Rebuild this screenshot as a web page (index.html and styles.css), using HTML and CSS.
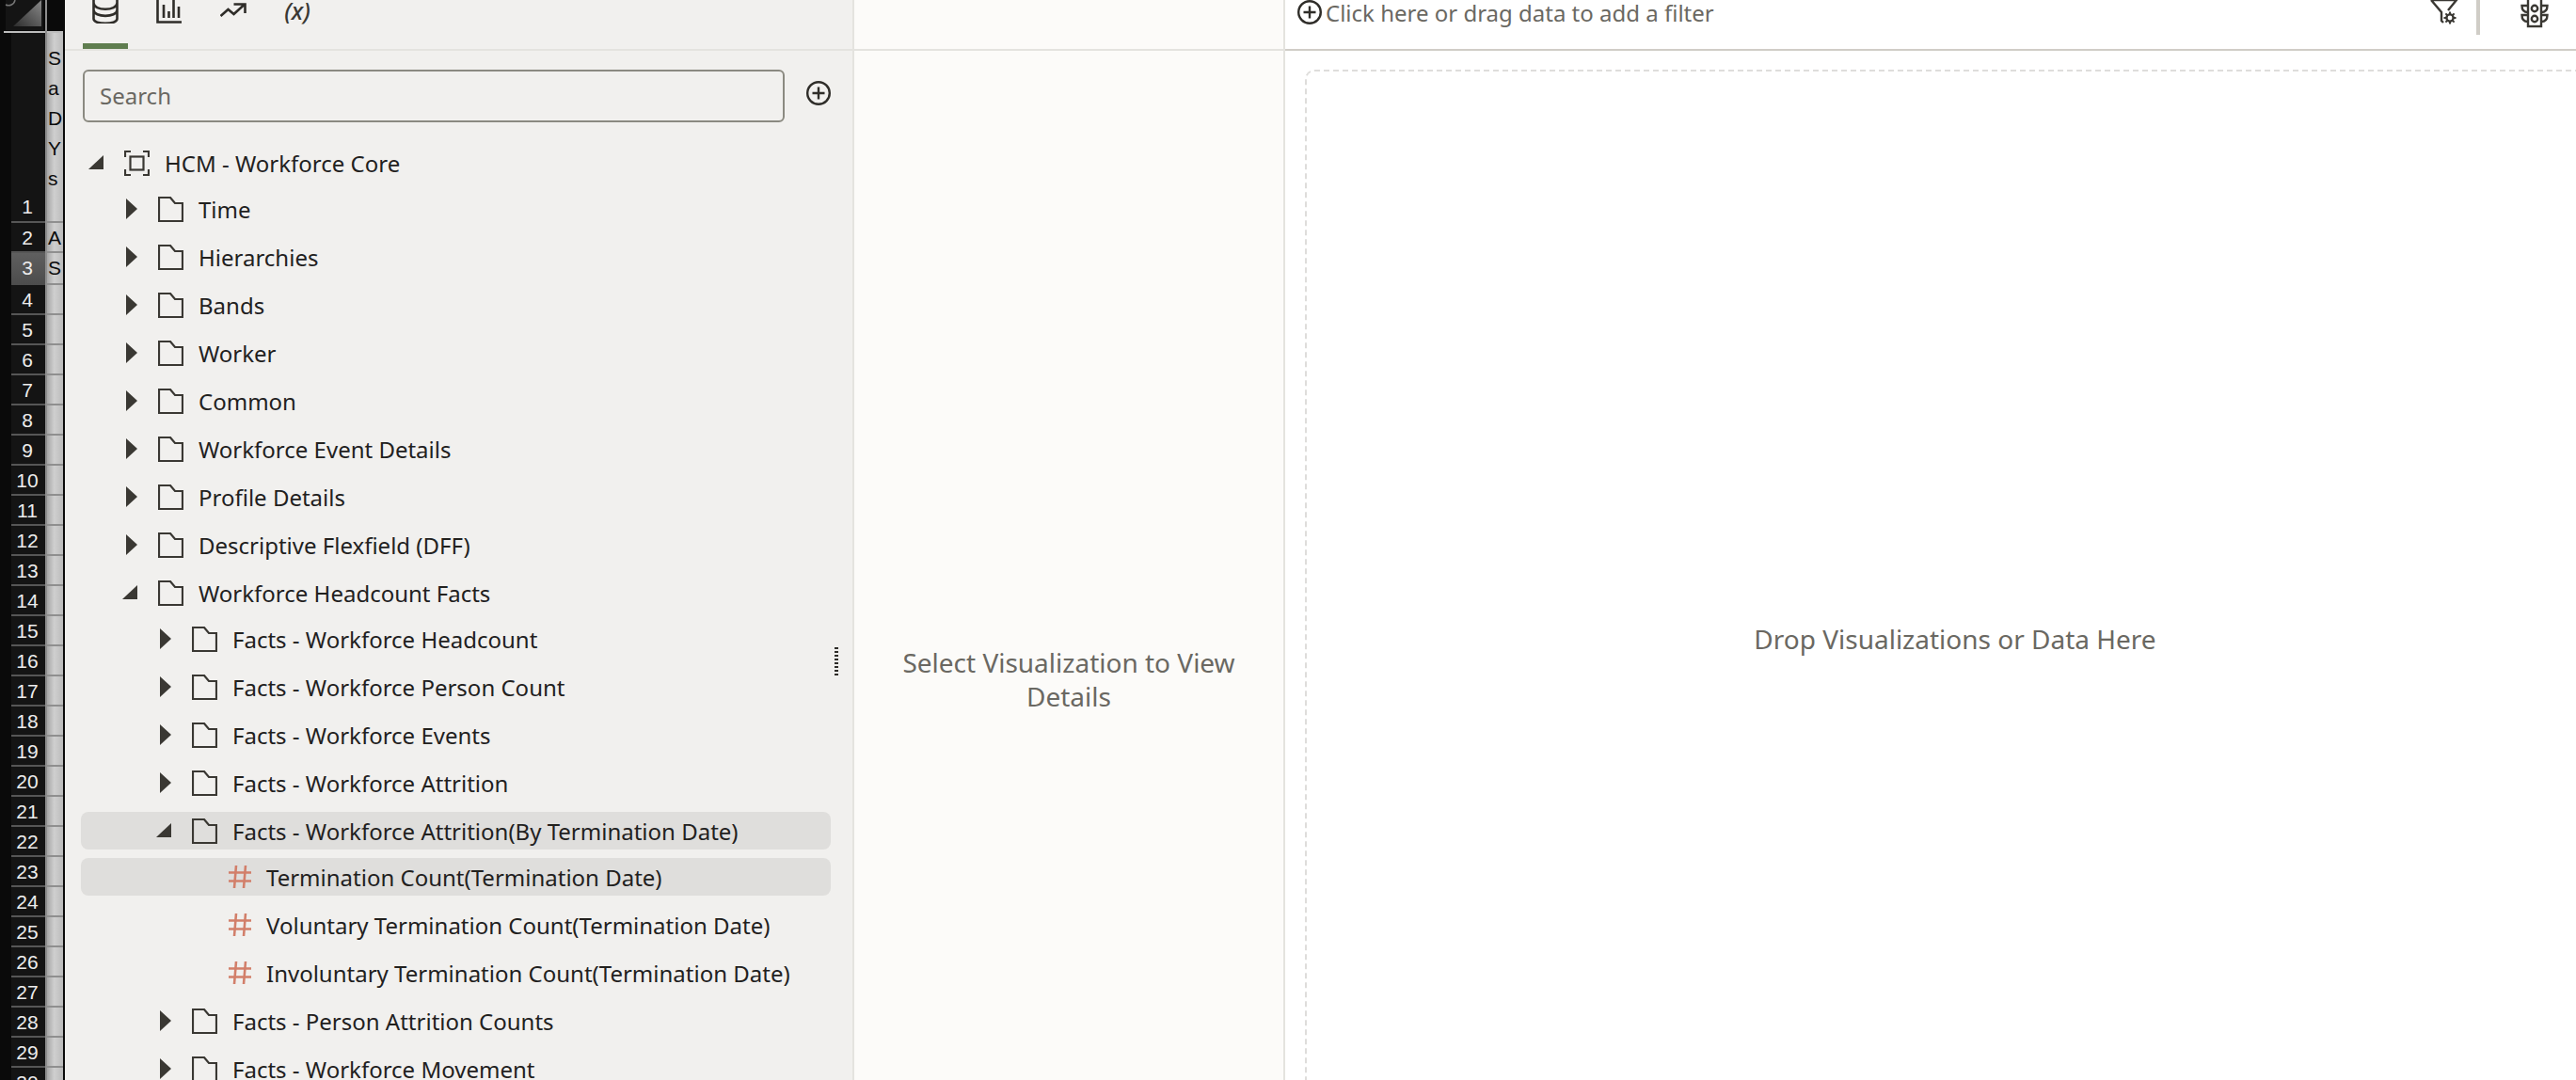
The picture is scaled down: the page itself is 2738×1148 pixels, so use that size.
FILE: index.html
```html
<!DOCTYPE html>
<html lang="en">
<head>
    <meta charset="UTF-8">
    <title>Workbook Editor</title>
    <link rel="stylesheet" href="styles.css">
</head>
<body>
    <div class="app">
        <!-- spreadsheet peeking out behind the browser window -->
        <div class="sheet">
            <div class="sheet-edge"></div>
            <div class="sheet-nums">
                <div class="sheet-corner">
                    <svg class="corner-mark" width="44" height="33" viewBox="0 0 44 33">
                        <defs>
                            <linearGradient id="cornerFill" x1="0" y1="1" x2="1" y2="0">
                                <stop offset="0" stop-color="#2c2c2c"/>
                                <stop offset="1" stop-color="#8a8a8a"/>
                            </linearGradient>
                        </defs>
                        <rect x="2" y="0" width="40" height="32" fill="#141414"/>
                        <path d="M10 28 L40 0 V28 Z" fill="url(#cornerFill)"/>
                        <path d="M2 5 A7 7 0 0 0 12 0" fill="none" stroke="#777" stroke-width="1.5"/>
                    </svg>
                </div>
                <div class="num num-first">1</div>
                <div class="num">2</div>
                <div class="num num-active">3</div>
                <div class="num">4</div>
                <div class="num">5</div>
                <div class="num">6</div>
                <div class="num">7</div>
                <div class="num">8</div>
                <div class="num">9</div>
                <div class="num">10</div>
                <div class="num">11</div>
                <div class="num">12</div>
                <div class="num">13</div>
                <div class="num">14</div>
                <div class="num">15</div>
                <div class="num">16</div>
                <div class="num">17</div>
                <div class="num">18</div>
                <div class="num">19</div>
                <div class="num">20</div>
                <div class="num">21</div>
                <div class="num">22</div>
                <div class="num">23</div>
                <div class="num">24</div>
                <div class="num">25</div>
                <div class="num">26</div>
                <div class="num">27</div>
                <div class="num">28</div>
                <div class="num">29</div>
                <div class="num">30</div>
            </div>
            <div class="sheet-cells">
                <div class="cell-head"></div>
                <div class="cell cell-first">S<br>a<br>D<br>Y<br>s</div>
                <div class="cell">A</div>
                <div class="cell cell-tall">S</div>
                <div class="cell"></div>
                <div class="cell"></div>
                <div class="cell"></div>
                <div class="cell"></div>
                <div class="cell"></div>
                <div class="cell"></div>
                <div class="cell"></div>
                <div class="cell"></div>
                <div class="cell"></div>
                <div class="cell"></div>
                <div class="cell"></div>
                <div class="cell"></div>
                <div class="cell"></div>
                <div class="cell"></div>
                <div class="cell"></div>
                <div class="cell"></div>
                <div class="cell"></div>
                <div class="cell"></div>
                <div class="cell"></div>
                <div class="cell"></div>
                <div class="cell"></div>
                <div class="cell"></div>
                <div class="cell"></div>
                <div class="cell"></div>
                <div class="cell"></div>
                <div class="cell"></div>
                <div class="cell"></div>
            </div>
        </div>

        <!-- data panel -->
        <aside class="data-panel">
            <div class="tabs">
                <div class="tab tab-active">
                    <svg width="28" height="28" viewBox="0 0 28 28" class="tab-icon">
                        <path d="M1.5 2 V23 C1.5 29.5 26.5 29.5 26.5 23 V2 M1.5 6 C1.5 15 26.5 15 26.5 6 M1.5 13.5 C1.5 22 26.5 22 26.5 13.5 M1.5 2 C1.5 -6 26.5 -6 26.5 2"/>
                    </svg>
                </div>
                <div class="tab">
                    <svg width="28" height="32" viewBox="0 0 28 32" class="tab-icon">
                        <path d="M1.5 0 V30.5 H27 M8 12 V26 M13.5 19 V26 M18.5 5 V26 M24 14 V26"/>
                    </svg>
                </div>
                <div class="tab tab-trend">
                    <svg width="28" height="16" viewBox="0 0 28 16" class="tab-icon">
                        <path d="M0.5 14 L8.5 7 L14.5 12 L25 2.5 M14.5 1.5 H26.5 V11"/>
                    </svg>
                </div>
                <div class="tab tab-text">(x)</div>
            </div>

            <div class="search-row">
                <div class="search-box">Search</div>
                <svg class="add-icon" width="26" height="26" viewBox="0 0 26 26">
                    <circle cx="13" cy="13" r="11.8"/>
                    <path d="M13 6.5 V19.5 M6.5 13 H19.5"/>
                </svg>
            </div>

            <ul class="tree">
                <li>
                    <div class="row lvl-0">
                        <svg class="toggle" width="18" height="16" viewBox="0 0 18 16"><path d="M0 15 L16 0 V15 Z"/></svg>
                        <svg class="node-icon" width="27" height="27" viewBox="0 0 27 27">
                            <rect x="6.5" y="6.5" width="14" height="14"/>
                            <path d="M1 7 V1 H7 M20 1 H26 V7 M26 20 V26 H20 M7 26 H1 V20"/>
                        </svg>
                        <span>HCM - Workforce Core</span>
                    </div>
                    <ul class="children">
                        <li><div class="row lvl-1"><svg class="toggle" width="18" height="24" viewBox="0 0 18 24"><path d="M4 1 L16 12 L4 23 Z"/></svg><svg class="node-icon" width="27" height="27" viewBox="0 0 27 27"><path d="M1 1 H13 L18 7 H26 V26 H1 Z"/></svg><span>Time</span></div></li>
                        <li><div class="row lvl-1"><svg class="toggle" width="18" height="24" viewBox="0 0 18 24"><path d="M4 1 L16 12 L4 23 Z"/></svg><svg class="node-icon" width="27" height="27" viewBox="0 0 27 27"><path d="M1 1 H13 L18 7 H26 V26 H1 Z"/></svg><span>Hierarchies</span></div></li>
                        <li><div class="row lvl-1"><svg class="toggle" width="18" height="24" viewBox="0 0 18 24"><path d="M4 1 L16 12 L4 23 Z"/></svg><svg class="node-icon" width="27" height="27" viewBox="0 0 27 27"><path d="M1 1 H13 L18 7 H26 V26 H1 Z"/></svg><span>Bands</span></div></li>
                        <li><div class="row lvl-1"><svg class="toggle" width="18" height="24" viewBox="0 0 18 24"><path d="M4 1 L16 12 L4 23 Z"/></svg><svg class="node-icon" width="27" height="27" viewBox="0 0 27 27"><path d="M1 1 H13 L18 7 H26 V26 H1 Z"/></svg><span>Worker</span></div></li>
                        <li><div class="row lvl-1"><svg class="toggle" width="18" height="24" viewBox="0 0 18 24"><path d="M4 1 L16 12 L4 23 Z"/></svg><svg class="node-icon" width="27" height="27" viewBox="0 0 27 27"><path d="M1 1 H13 L18 7 H26 V26 H1 Z"/></svg><span>Common</span></div></li>
                        <li><div class="row lvl-1"><svg class="toggle" width="18" height="24" viewBox="0 0 18 24"><path d="M4 1 L16 12 L4 23 Z"/></svg><svg class="node-icon" width="27" height="27" viewBox="0 0 27 27"><path d="M1 1 H13 L18 7 H26 V26 H1 Z"/></svg><span>Workforce Event Details</span></div></li>
                        <li><div class="row lvl-1"><svg class="toggle" width="18" height="24" viewBox="0 0 18 24"><path d="M4 1 L16 12 L4 23 Z"/></svg><svg class="node-icon" width="27" height="27" viewBox="0 0 27 27"><path d="M1 1 H13 L18 7 H26 V26 H1 Z"/></svg><span>Profile Details</span></div></li>
                        <li><div class="row lvl-1"><svg class="toggle" width="18" height="24" viewBox="0 0 18 24"><path d="M4 1 L16 12 L4 23 Z"/></svg><svg class="node-icon" width="27" height="27" viewBox="0 0 27 27"><path d="M1 1 H13 L18 7 H26 V26 H1 Z"/></svg><span>Descriptive Flexfield (DFF)</span></div></li>
                        <li>
                            <div class="row lvl-1"><svg class="toggle" width="18" height="16" viewBox="0 0 18 16"><path d="M0 15 L16 0 V15 Z"/></svg><svg class="node-icon" width="27" height="27" viewBox="0 0 27 27"><path d="M1 1 H13 L18 7 H26 V26 H1 Z"/></svg><span>Workforce Headcount Facts</span></div>
                            <ul class="children">
                                <li><div class="row lvl-2"><svg class="toggle" width="18" height="24" viewBox="0 0 18 24"><path d="M4 1 L16 12 L4 23 Z"/></svg><svg class="node-icon" width="27" height="27" viewBox="0 0 27 27"><path d="M1 1 H13 L18 7 H26 V26 H1 Z"/></svg><span>Facts - Workforce Headcount</span></div></li>
                                <li><div class="row lvl-2"><svg class="toggle" width="18" height="24" viewBox="0 0 18 24"><path d="M4 1 L16 12 L4 23 Z"/></svg><svg class="node-icon" width="27" height="27" viewBox="0 0 27 27"><path d="M1 1 H13 L18 7 H26 V26 H1 Z"/></svg><span>Facts - Workforce Person Count</span></div></li>
                                <li><div class="row lvl-2"><svg class="toggle" width="18" height="24" viewBox="0 0 18 24"><path d="M4 1 L16 12 L4 23 Z"/></svg><svg class="node-icon" width="27" height="27" viewBox="0 0 27 27"><path d="M1 1 H13 L18 7 H26 V26 H1 Z"/></svg><span>Facts - Workforce Events</span></div></li>
                                <li><div class="row lvl-2"><svg class="toggle" width="18" height="24" viewBox="0 0 18 24"><path d="M4 1 L16 12 L4 23 Z"/></svg><svg class="node-icon" width="27" height="27" viewBox="0 0 27 27"><path d="M1 1 H13 L18 7 H26 V26 H1 Z"/></svg><span>Facts - Workforce Attrition</span></div></li>
                                <li>
                                    <div class="row lvl-2 row-selected"><svg class="toggle" width="18" height="16" viewBox="0 0 18 16"><path d="M0 15 L16 0 V15 Z"/></svg><svg class="node-icon" width="27" height="27" viewBox="0 0 27 27"><path d="M1 1 H13 L18 7 H26 V26 H1 Z"/></svg><span>Facts - Workforce Attrition(By Termination Date)</span></div>
                                    <ul class="children">
                                        <li><div class="row lvl-3 row-selected"><svg class="measure" width="26" height="26" viewBox="0 0 26 26"><path d="M9 1 L7 25 M19 1 L17 25 M1 8.5 H25 M1 17.5 H25"/></svg><span>Termination Count(Termination Date)</span></div></li>
                                        <li><div class="row lvl-3"><svg class="measure" width="26" height="26" viewBox="0 0 26 26"><path d="M9 1 L7 25 M19 1 L17 25 M1 8.5 H25 M1 17.5 H25"/></svg><span>Voluntary Termination Count(Termination Date)</span></div></li>
                                        <li><div class="row lvl-3"><svg class="measure" width="26" height="26" viewBox="0 0 26 26"><path d="M9 1 L7 25 M19 1 L17 25 M1 8.5 H25 M1 17.5 H25"/></svg><span>Involuntary Termination Count(Termination Date)</span></div></li>
                                    </ul>
                                </li>
                                <li><div class="row lvl-2"><svg class="toggle" width="18" height="24" viewBox="0 0 18 24"><path d="M4 1 L16 12 L4 23 Z"/></svg><svg class="node-icon" width="27" height="27" viewBox="0 0 27 27"><path d="M1 1 H13 L18 7 H26 V26 H1 Z"/></svg><span>Facts - Person Attrition Counts</span></div></li>
                                <li><div class="row lvl-2"><svg class="toggle" width="18" height="24" viewBox="0 0 18 24"><path d="M4 1 L16 12 L4 23 Z"/></svg><svg class="node-icon" width="27" height="27" viewBox="0 0 27 27"><path d="M1 1 H13 L18 7 H26 V26 H1 Z"/></svg><span>Facts - Workforce Movement</span></div></li>
                            </ul>
                        </li>
                    </ul>
                </li>
            </ul>
            <div class="splitter"></div>
        </aside>

        <!-- properties panel -->
        <section class="detail-panel">
            <div class="detail-top"></div>
            <div class="detail-body">Select Visualization to View Details</div>
        </section>

        <!-- canvas -->
        <main class="canvas">
            <div class="filter-bar">
                <svg class="add-icon" width="26" height="26" viewBox="0 0 26 26">
                    <circle cx="13" cy="13" r="11.8"/>
                    <path d="M13 6.5 V19.5 M6.5 13 H19.5"/>
                </svg>
                <span class="filter-text">Click here or drag data to add a filter</span>
                <svg class="filter-icon" width="30" height="27" viewBox="0 0 30 27">
                    <path d="M1 1 H28 L19 12 M1 1 L12 14 V23 L14 25"/>
                    <circle cx="21" cy="20" r="3.6"/>
                    <path class="gear-teeth" d="M21 13.5 V16 M21 24 V26.5 M14.5 20 H17 M25 20 H27.5 M16.4 15.4 L18.2 17.2 M23.8 22.8 L25.6 24.6 M25.6 15.4 L23.8 17.2 M18.2 22.8 L16.4 24.6"/>
                </svg>
                <div class="filter-sep"></div>
                <svg class="light-icon" width="30" height="30" viewBox="0 0 30 30">
                    <rect x="8" y="-3" width="14" height="31"/>
                    <circle cx="15" cy="9" r="3.2"/>
                    <circle cx="15" cy="20" r="3.2"/>
                    <path d="M8 6 H1.5 C1.5 11 4 13 8 13 M22 6 H28.5 C28.5 11 26 13 22 13 M8 16 H1.5 C1.5 21 4 23 8 23 M22 16 H28.5 C28.5 21 26 23 22 23"/>
                </svg>
            </div>
            <div class="canvas-body">
                <div class="drop-area">Drop Visualizations or Data Here</div>
            </div>
        </main>
    </div>
</body>
</html>
```

FILE: styles.css
```css
* {
    margin: 0;
    padding: 0;
    box-sizing: border-box;
}

html,
body {
    height: 100%;
    overflow: hidden;
}

body {
    font-family: 'Noto Sans', 'Open Sans', sans-serif;
    background: #fff;
    color: #22211e;
}

ul {
    list-style: none;
}

.app {
    display: flex;
    width: 2738px;
    height: 1148px;
    overflow: hidden;
}

/* spreadsheet strip */
.sheet {
    display: flex;
    flex: 0 0 69px;
    background: #0a0a0a;
    border-right: 2px solid #0a0a0a;
    font-family: 'Liberation Sans', Arial, sans-serif;
    font-size: 21px;
    overflow: hidden;
}

.sheet-edge {
    flex: 0 0 4px;
}

.sheet-nums {
    flex: 0 0 44px;
    padding-right: 0;
}

.sheet-corner {
    height: 35px;
    border-bottom: 2px solid #bdbdbd;
}

.corner-mark {
    display: block;
}

.num {
    height: 32px;
    margin-left: 8px;
    background: #141414;
    border-bottom: 2px solid #565656;
    color: #ececec;
    text-align: center;
    line-height: 32px;
    padding-right: 2px;
}

.num-first {
    height: 202px;
    line-height: 34px;
    padding-top: 168px;
}

.num-active {
    height: 34px;
    background: linear-gradient(180deg, #5f5f5f, #4c4c4c);
    border-bottom: 0;
}

.sheet-cells {
    flex: 0 0 19px;
    color: #0c0c0c;
    border-left: 2px solid #8d8d8d;
}

.cell-head {
    height: 35px;
    border-bottom: 2px solid #bdbdbd;
}

.cell {
    height: 32px;
    padding-left: 1px;
    background: linear-gradient(90deg, #a6a6a6, #cfcfcf 45%, #bbb);
    border-bottom: 2px solid #8f8f8f;
    line-height: 32px;
    overflow: hidden;
    white-space: nowrap;
}

.cell-first {
    height: 202px;
    padding-top: 11px;
}

.cell-tall {
    height: 34px;
}

/* data panel */
.data-panel {
    position: relative;
    flex: 0 0 839px;
    background: #f1f0ee;
    border-right: 2px solid #e4e3df;
    overflow: hidden;
}

.tabs {
    display: flex;
    gap: 20px;
    height: 54px;
    padding-left: 19px;
    border-bottom: 2px solid #e4e3df;
}

.tab {
    display: flex;
    justify-content: center;
    align-items: flex-end;
    width: 48px;
    height: 52px;
    padding-bottom: 27px;
}

.tab-active {
    padding-bottom: 21px;
    border-bottom: 6px solid #5f7d4f;
}

.tab-trend {
    padding-bottom: 33px;
}

.tab-text {
    font-size: 25px;
    font-style: italic;
    font-weight: 500;
    line-height: 32px;
    color: #3a3833;
    padding-bottom: 25px;
}

.tab-icon {
    flex: none;
    fill: none;
    stroke: #2f2d29;
    stroke-width: 2.6;
}

.tab-icon,
.node-icon,
.toggle,
.measure,
.add-icon {
    display: block;
}

.search-row {
    display: flex;
    align-items: flex-start;
    gap: 23px;
    padding: 20px 0 0 19px;
}

.search-box {
    width: 746px;
    height: 56px;
    padding-left: 16px;
    border: 2px solid #8b8a81;
    border-radius: 6px;
    color: #6a6862;
    font-size: 24px;
    line-height: 52px;
}

.add-icon {
    flex: none;
    margin-top: 12px;
    fill: none;
    stroke: #2f2d29;
    stroke-width: 2.4;
}

.tree {
    margin-top: 23px;
    padding-left: 17px;
    padding-right: 23px;
}

.children {
    display: flex;
    flex-direction: column;
    gap: 11px;
    margin-top: 9px;
}

.row {
    display: flex;
    align-items: center;
    height: 40px;
    border-radius: 8px;
    font-size: 24px;
    white-space: nowrap;
}

.row-selected {
    background: #dfdedc;
}

.lvl-0 { padding-left: 8px; }
.lvl-1 { padding-left: 44px; }
.lvl-2 { padding-left: 80px; }
.lvl-3 { padding-left: 154px; }

.toggle {
    flex: none;
    margin-right: 20px;
    fill: #3a3833;
}

.node-icon {
    flex: none;
    margin-right: 16px;
    fill: none;
    stroke: #3a3833;
    stroke-width: 2.2;
}

.measure {
    flex: none;
    margin: 0 15px 0 2px;
    fill: none;
    stroke: #d27f6a;
    stroke-width: 2.6;
}

/* grab handle on the panel edge */
.splitter {
    position: absolute;
    left: 818px;
    top: 688px;
    width: 4px;
    height: 30px;
    background: repeating-linear-gradient(180deg, #2f2d29 0 2px, transparent 2px 4px);
}

/* properties panel */
.detail-panel {
    flex: 0 0 458px;
    background: #fcfbf9;
    border-right: 2px solid #e4e3df;
}

.detail-top {
    height: 54px;
    border-bottom: 2px solid #e4e3df;
}

.detail-body {
    width: 380px;
    margin: 632px auto 0;
    color: #6a6862;
    font-size: 28px;
    line-height: 36px;
    text-align: center;
}

/* canvas */
.canvas {
    flex: 1;
    min-width: 0;
    background: #fff;
}

.filter-bar {
    display: flex;
    align-items: flex-start;
    height: 54px;
    padding-left: 13px;
    border-bottom: 2px solid #d0cdc7;
}

.filter-bar .add-icon {
    margin-top: 0;
}

.filter-text {
    flex: 1;
    margin-left: 4px;
    color: #6a6862;
    font-size: 24px;
    line-height: 28px;
}

.filter-icon {
    flex: none;
    margin-top: -1px;
    fill: none;
    stroke: #3a3833;
    stroke-width: 2.4;
}

.gear-teeth {
    stroke-width: 2;
}

.filter-sep {
    flex: none;
    width: 4px;
    height: 37px;
    margin: 0 43px 0 19px;
    background: #d0cdc7;
}

.light-icon {
    flex: none;
    margin-right: 29px;
    fill: none;
    stroke: #3a3833;
    stroke-width: 2.4;
}

.canvas-body {
    padding: 20px 0 0 21px;
}

.drop-area {
    display: flex;
    justify-content: center;
    align-items: center;
    width: 1382px;
    height: 1210px;
    border: 2px dashed #dedddb;
    border-radius: 10px;
    color: #6a6862;
    font-size: 28px;
}
```
